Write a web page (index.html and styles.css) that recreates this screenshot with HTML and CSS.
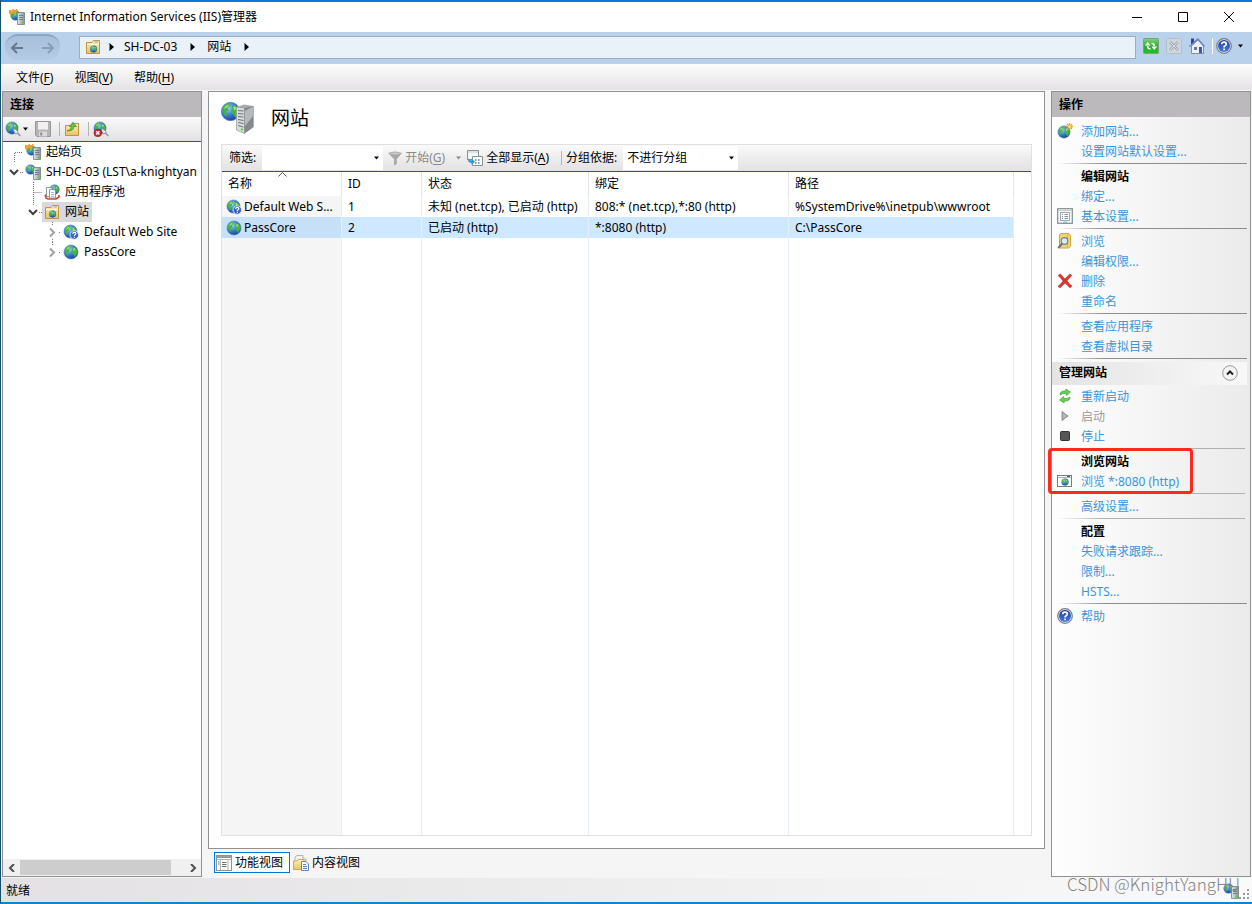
FILE: index.html
```html
<!DOCTYPE html>
<html lang="zh-CN">
<head>
<meta charset="utf-8">
<title>Internet Information Services (IIS)管理器</title>
<link rel="stylesheet" href="styles.css">
</head>
<body>
<svg class="sprite" aria-hidden="true">
  <defs>
    <radialGradient id="sea" cx="0.35" cy="0.3" r="0.8">
      <stop offset="0" stop-color="#a5dcfb"/><stop offset="0.45" stop-color="#3a86d8"/><stop offset="1" stop-color="#12368e"/>
    </radialGradient>
    <linearGradient id="gold" x1="0" y1="0" x2="0" y2="1">
      <stop offset="0" stop-color="#fff0b8"/><stop offset="1" stop-color="#e8c166"/>
    </linearGradient>
    <linearGradient id="steel" x1="0" y1="0" x2="1" y2="0">
      <stop offset="0" stop-color="#e2e6e8"/><stop offset="1" stop-color="#8b9499"/>
    </linearGradient>
    <linearGradient id="royal" x1="0" y1="0" x2="0" y2="1">
      <stop offset="0" stop-color="#1c3f9e"/><stop offset="1" stop-color="#4a78e0"/>
    </linearGradient>
    <linearGradient id="leaf" x1="0" y1="0" x2="0" y2="1">
      <stop offset="0" stop-color="#7fd67a"/><stop offset="0.5" stop-color="#2fae2f"/><stop offset="1" stop-color="#17c41c"/>
    </linearGradient>
  </defs>
  <symbol id="globe" viewBox="0 0 16 16">
    <circle cx="8" cy="8" r="7" fill="url(#sea)" stroke="#5b7fb4" stroke-width=".6"/>
    <path d="M2 5.5Q4 1.5 8 1.8L7.5 4 6 5.2 6.5 7 4.5 8.2 5.5 10 4.5 12 2.5 9.5ZM9.5 3.5L12 3.2Q14.5 5.5 14.6 8.5L13 11 11.5 13 10.5 10.5 8.8 9 9.2 6.5Z" fill="#46b53c"/>
    <path d="M3 6Q4 3 7 2.6L6 4.5ZM10 4.5L11.5 4 12.5 6 10.8 7Z" fill="#a5e078"/>
  </symbol>
  <symbol id="server" viewBox="0 0 8 13">
    <path d="M.5 1.5L2 .5H7.5V12.5H.5Z" fill="url(#steel)" stroke="#747d82" stroke-width=".8"/>
    <path d="M2 3.5H6.2M2 5.5H6.2M2 7.5H6.2" stroke="#647078" stroke-width=".8"/>
    <rect x="4.6" y="9.8" width="1.8" height="1.4" fill="#43d51c"/>
  </symbol>
  <symbol id="site-server" viewBox="0 0 16 16">
    <use href="#globe" x="0" y="0" width="11" height="11"/>
    <use href="#server" x="8" y="3" width="8" height="13"/>
  </symbol>
  <symbol id="start-page" viewBox="0 0 16 16">
    <use href="#globe" x="1" y="1" width="11" height="11"/>
    <path d="M0 1L3 2 4 0 6 2 8 0 8 3 6 4 3 4 2 6 0 4Z" fill="#f4a623" stroke="#d87e18" stroke-width=".5"/>
    <use href="#server" x="8" y="3" width="8" height="13"/>
  </symbol>
  <symbol id="site-folder" viewBox="0 0 16 16">
    <path d="M1.5 3.5H7L8.5 1.5H14.5V14.5H1.5Z" fill="url(#gold)" stroke="#c4933d"/>
    <path d="M2 5.5H14" stroke="#fff8dc"/>
    <path d="M9.5 3H13" stroke="#67b8d5"/>
    <use href="#globe" x="4.5" y="6" width="8" height="8"/>
  </symbol>
  <symbol id="globe-question" viewBox="0 0 16 16">
    <use href="#globe" x="0" y="0" width="15" height="15"/>
    <circle cx="11.3" cy="11" r="4.3" fill="#3c67b8" stroke="#dce8fa"/>
    <path d="M9.700 9.9Q9.8 8.4 11.3 8.4T12.900 9.8Q12.800 10.7 11.4 11.2V12M11.4 12.7V13.8" fill="none" stroke="#fff" stroke-width="1.2"/>
  </symbol>
  <symbol id="app-pool" viewBox="0 0 16 16">
    <use href="#globe" x="5" y="0" width="11" height="11"/>
    <path d="M.7 12.5L2 11V14L4 15H12L15 13V11" fill="none" stroke="#d6452f" stroke-width="1.6"/>
    <path d="M2.5 3.5H8V12.5H2.5Z" fill="#f5f7fa" stroke="#78838f" stroke-width=".8"/>
    <path d="M5.5 5.5H10L11.5 7V14H5.5Z" fill="#fff" stroke="#78838f" stroke-width=".8"/>
    <path d="M7 8.5H10M7 10.5H10M7 12.3H10" stroke="#9aa5b0" stroke-width=".8"/>
  </symbol>
  <symbol id="globe-plug" viewBox="0 0 16 16">
    <use href="#globe" x="0" y="0" width="14" height="14"/>
    <path d="M8 8.5L10 7.8 13 10.5 12.5 12.5 10 12.8Z" fill="#e4eaee" stroke="#6f8593" stroke-width=".8"/>
    <path d="M12.5 12L15.3 15" stroke="#8ca2ad" stroke-width="1.8"/>
  </symbol>
  <symbol id="globe-disconnect" viewBox="0 0 16 16">
    <use href="#globe-plug" width="16" height="16"/>
    <circle cx="4.8" cy="11.8" r="3.9" fill="#d22a2a" stroke="#931717" stroke-width=".6"/>
    <path d="M3.2 10.2L6.4 13.4M6.4 10.2L3.2 13.4" stroke="#fff" stroke-width="1.4"/>
  </symbol>
  <symbol id="save" viewBox="0 0 16 16">
    <path d="M.5 .5H15.5V15.5H2L.5 14Z" fill="#b4b4b4" stroke="#979797"/>
    <rect x="3" y="1" width="10" height="7.5" fill="#f1f1f1"/>
    <rect x="4" y="10.5" width="8" height="5" fill="#dadada"/><rect x="5.2" y="11.5" width="2" height="3" fill="#8b8b8b"/>
  </symbol>
  <symbol id="folder-up" viewBox="0 0 16 16">
    <path d="M1.5 4.5H7L8.5 2.5H14.5V14.5H1.5Z" fill="url(#gold)" stroke="#c4933d"/>
    <path d="M3 10Q7 9.500 7.500 5.5H5.5L9 1.2 12.5 5.5H10Q10 10 3 10Z" fill="#67c83b" stroke="#328c1b" stroke-width=".7"/>
  </symbol>
  <symbol id="help" viewBox="0 0 16 16">
    <circle cx="8" cy="8" r="7.3" fill="#e5e8ee" stroke="#777d8b" stroke-width="1.2"/>
    <circle cx="8" cy="8" r="6" fill="url(#royal)"/>
    <path d="M5.7 6.3Q5.7 4.2 8 4.2T10.3 6.2Q10.2 7.4 8.2 8.4V9.6M8.1 10.5V12.2" fill="none" stroke="#fff" stroke-width="1.7"/>
  </symbol>
  <symbol id="refresh-box" viewBox="0 0 16 16">
    <rect x=".5" y=".5" width="15" height="15" rx="1" fill="url(#leaf)" stroke="#7e9f7e"/>
    <path d="M7.500 11Q4.700 11 4.700 8" fill="none" stroke="#fff" stroke-width="1.600"/><path d="M1.800 7.500L4.700 4 7.600 7.500Z" fill="#fff"/>
    <path d="M8.500 5.500Q11.300 5.500 11.300 8" fill="none" stroke="#fff" stroke-width="1.600"/><path d="M8.400 8.500L11.300 12 14.200 8.500Z" fill="#fff"/>
  </symbol>
  <symbol id="stop-box" viewBox="0 0 16 16">
    <rect x=".5" y=".5" width="15" height="15" rx="1" fill="#cdd5dd" stroke="#b5bfc9"/>
    <path d="M4 4L12 12M12 4L4 12" stroke="#a2abb4" stroke-width="2.600"/><path d="M4 4L12 12M12 4L4 12" stroke="#e8ecf0" stroke-width=".8"/>
  </symbol>
  <symbol id="home" viewBox="0 0 16 16">
    <path d="M2 .5H5V6H2Z" fill="#2c3fc0"/>
    <path d="M2.500 8L9 2 14.500 8V15.500H2.500Z" fill="#eef0f4" stroke="#6a7895" stroke-width=".8"/>
    <path d="M.5 8.500L8.800 1 15.500 8.500" fill="none" stroke="#6785c9" stroke-width="1.500"/>
    <path d="M10 9H13V15H10Z" fill="#375b9e"/><path d="M5 9H8V12H5Z" fill="#65799d"/>
  </symbol>
  <symbol id="big-server" viewBox="0 0 34 34">
    <use href="#globe" x="-1" y="0" width="21" height="21"/>
    <path d="M15.500 6L23 3.500 32.500 5V26L23.500 32.500 15.500 29Z" fill="#a9adb0"/>
    <path d="M15.500 6L23.500 7V32.500L15.500 29Z" fill="#d8dbde" stroke="#8d9296" stroke-width=".6"/>
    <path d="M23.500 7L32.500 5V26L23.500 32.500Z" fill="#85898c"/><path d="M24 10L32 5.500V15L24 25Z" fill="#b6babc"/>
    <path d="M17 9.500L22.500 10M17 12.500L22.500 13M17 15.500L22.500 16M17 18.500L22.500 19.500M17 21.500L22.500 22.500M17 24.500L22.500 26" stroke="#6c7276"/>
    <path d="M20 28L22 29" stroke="#4ad72a" stroke-width="1.800"/>
  </symbol>
  <symbol id="funnel" viewBox="0 0 16 16">
    <path d="M1 3Q8 0 15 3L9.800 9V14L7 15.500V9Z" fill="#a8a8a8"/><path d="M2 3.300Q8 1.500 14 3.300 8 5.500 2 3.300Z" fill="#d0d0d0"/>
  </symbol>
  <symbol id="show-all" viewBox="0 0 16 16">
    <path d="M.5 .5H11.500V9.500H.5Z" fill="#f5f7f9" stroke="#87919a"/><path d="M1 2H11" stroke="#c5cbd2"/>
    <path d="M5.500 6.500H15.500V15.500H5.500Z" fill="#fff" stroke="#87919a"/>
    <path d="M8 10H9.500M11 10H12.500M8 13H9.500M11 13H12.500" stroke="#5372a0" stroke-width="1.500"/>
    <path d="M.5 7Q1 10.500 4.500 10.500V8.500L8 11.800 4.500 15V13Q0 12.500 .5 7Z" fill="#2f94d8"/>
  </symbol>
  <symbol id="globe-new" viewBox="0 0 16 16">
    <use href="#globe" x="0" y="2" width="14" height="14"/>
    <path d="M12.500 0V7M9 3.500H16M10 1L15 6M15 1L10 6" stroke="#f2a02c" stroke-width="1.300"/><circle cx="12.500" cy="3.500" r="1.300" fill="#ffe793"/>
  </symbol>
  <symbol id="settings-form" viewBox="0 0 16 16">
    <rect x=".7" y=".7" width="14.600" height="14.600" fill="#fafafa" stroke="#858b91" stroke-width="1.200"/>
    <path d="M1 2.500H15" stroke="#c7ccd1"/><rect x="3.500" y="4.500" width="9" height="8" fill="#fff" stroke="#a1a8ae"/>
    <path d="M5 6.500H6M7.500 6.500H11M5 8.500H6M7.500 8.500H11M5 10.500H6M7.500 10.500H11" stroke="#87919b"/><path d="M6 14.200H10" stroke="#39cde0"/>
  </symbol>
  <symbol id="folder-search" viewBox="0 0 16 16">
    <path d="M2.500 1.500L4 .5H12L13.500 3V13.500L11.500 15H2.500Z" fill="#f3d574" stroke="#d3a536"/>
    <path d="M10.500 2V14" stroke="#dcae3e"/><circle cx="7.500" cy="8" r="3.300" fill="#d5e9fa" stroke="#6f87a0" stroke-width="1.300"/>
    <path d="M5.200 10.500L1.200 15" stroke="#697481" stroke-width="2"/>
  </symbol>
  <symbol id="delete" viewBox="0 0 16 16">
    <path d="M1 2.500L3.500 1Q5.500 3.500 8 6 10.500 3 13 1L14.800 2.500Q12 5 10 8 12 11 15 13L13 14.800Q10.500 12.500 8 10 5.500 12.500 3 14.800L1 13.500Q4 11 6 8 4 5 1 2.500Z" fill="#e5322d" stroke="#b5302b" stroke-width=".6"/>
  </symbol>
  <symbol id="restart" viewBox="0 0 16 16">
    <path d="M3 7Q3 2.500 8.500 3L9 1 13.500 4 9.500 7.500 9 5.500Q5.500 5 3 7Z" fill="#6bd052" stroke="#3a9a2f" stroke-width=".6"/>
    <path d="M13 9Q13 13.500 7.500 13L7 15 2.500 12 6.500 8.500 7 10.500Q10.500 11 13 9Z" fill="#6bd052" stroke="#3a9a2f" stroke-width=".6"/>
  </symbol>
  <symbol id="play" viewBox="0 0 16 16"><path d="M5 3.500L11 8 5 12.500Z" fill="#b4b4b4" stroke="#8e8e8e"/></symbol>
  <symbol id="stop" viewBox="0 0 16 16"><rect x="3.500" y="3.500" width="9" height="9" rx="1" fill="#555" stroke="#333"/></symbol>
  <symbol id="browse-window" viewBox="0 0 16 16">
    <rect x=".5" y="2.500" width="14" height="11" fill="#fff" stroke="#777d84"/><path d="M1 4.500H14" stroke="#b2b8be"/><path d="M10 3.500H13" stroke="#555"/>
    <use href="#globe" x="4" y="5" width="8" height="8"/>
  </symbol>
  <symbol id="features" viewBox="0 0 16 16">
    <rect x=".5" y=".5" width="15" height="15" fill="#fdfdf5" stroke="#8c9297"/><path d="M1 2H15" stroke="#949ba1" stroke-width="2"/><path d="M1 4.500H15M4.500 5V15M12 5V15" stroke="#b2b7ba"/>
    <path d="M2 7H3.500M2 9H3.500M6 7.500H10.500M6 9.500H10.500M6 11.500H10.500" stroke="#67717b"/>
  </symbol>
  <symbol id="content" viewBox="0 0 16 16">
    <path d="M2 2L4 .5H10V4H13V14H2Z" fill="#f3f3ef" stroke="#a3a39d" stroke-width=".8"/>
    <path d="M.5 6H4L5 4.500H11V14.500H.5Z" fill="url(#gold)" stroke="#c99b4a" stroke-width=".8"/>
    <path d="M8.500 6.500H13L15.500 9V15.500H8.500Z" fill="#fff" stroke="#6f8496"/><path d="M10 9.500H13M10 11.500H14M10 13.500H14" stroke="#5883b7"/>
  </symbol>
  <symbol id="caret" viewBox="0 0 7 4"><path d="M1 .5H6L3.500 3.500Z" fill="currentColor"/></symbol>
  <symbol id="crumb" viewBox="0 0 5 8"><path d="M.5 0L5 4 .5 8Z" fill="#000"/></symbol>
</svg>

<div class="window">
  <header class="titlebar">
    <svg class="icon"><use href="#start-page"/></svg>
    <h1 class="window-title">Internet Information Services (IIS)管理器</h1>
    <button class="window-button" aria-label="最小化"><svg class="glyph" viewBox="0 0 12 12"><path d="M1 6.500H11"/></svg></button>
    <button class="window-button" aria-label="最大化"><svg class="glyph" viewBox="0 0 12 12"><path d="M1.500 1.500H10.500V10.500H1.500Z"/></svg></button>
    <button class="window-button" aria-label="关闭"><svg class="glyph" viewBox="0 0 12 12"><path d="M1 1L11 11M11 1L1 11"/></svg></button>
  </header>

  <nav class="addressbar" aria-label="地址">
    <div class="history">
      <button aria-label="后退"><svg class="arrow" viewBox="0 0 14 12"><path d="M13 6H2M7 1L2 6L7 11"/></svg></button>
      <button class="faded" aria-label="前进"><svg class="arrow" viewBox="0 0 14 12"><path d="M1 6H12M7 1L12 6L7 11"/></svg></button>
    </div>
    <div class="breadcrumb">
      <svg class="icon"><use href="#site-folder"/></svg>
      <svg class="crumb"><use href="#crumb"/></svg>
      <a href="#">SH-DC-03</a>
      <svg class="crumb"><use href="#crumb"/></svg>
      <a href="#">网站</a>
      <svg class="crumb"><use href="#crumb"/></svg>
    </div>
    <div class="address-tools">
      <button aria-label="刷新"><svg class="icon"><use href="#refresh-box"/></svg></button>
      <button aria-label="停止"><svg class="icon"><use href="#stop-box"/></svg></button>
      <button aria-label="主页"><svg class="icon"><use href="#home"/></svg></button>
      <button class="help-button" aria-label="帮助"><svg class="icon"><use href="#help"/></svg><svg class="caret"><use href="#caret"/></svg></button>
    </div>
  </nav>

  <nav class="menubar" aria-label="菜单">
    <button>文件(<u>F</u>)</button>
    <button>视图(<u>V</u>)</button>
    <button>帮助(<u>H</u>)</button>
  </nav>

  <main class="workspace">
    <aside class="panel connections">
      <h2 class="panel-title">连接</h2>
      <div class="connection-tools">
        <button aria-label="连接"><svg class="icon"><use href="#globe-plug"/></svg><svg class="caret"><use href="#caret"/></svg></button>
        <button class="save" aria-label="保存"><svg class="icon"><use href="#save"/></svg></button>
        <span class="divider"></span>
        <button aria-label="向上"><svg class="icon"><use href="#folder-up"/></svg></button>
        <span class="divider"></span>
        <button aria-label="断开连接"><svg class="icon"><use href="#globe-disconnect"/></svg></button>
      </div>
      <ul class="tree">
        <li class="node"><svg class="lead" viewBox="0 0 20 20"><path class="dots" d="M11.500 20V10.500H20"/></svg><span class="label"><svg class="icon"><use href="#start-page"/></svg>起始页</span></li>
        <li class="node"><svg class="lead" viewBox="0 0 20 20"><path class="dots" d="M17 10.500H20"/><path class="open" d="M7 8L11 12L15 8"/></svg><span class="label"><svg class="icon"><use href="#site-server"/></svg>SH-DC-03 (LST\a-knightyan</span></li>
        <li class="node level-2"><svg class="lead" viewBox="0 0 20 20"><path class="dots" d="M11.500 0V20M11.500 10.500H20"/></svg><span class="label"><svg class="icon"><use href="#app-pool"/></svg>应用程序池</span></li>
        <li class="node level-2"><svg class="lead" viewBox="0 0 20 20"><path class="dots" d="M11.500 0V4M17 10.500H20"/><path class="open" d="M7 8L11 12L15 8"/></svg><span class="label current"><svg class="icon"><use href="#site-folder"/></svg>网站</span></li>
        <li class="node level-3"><svg class="lead" viewBox="0 0 20 20"><path class="dots" d="M11.500 0V3M11.500 17V20M18 10.500H20"/><path class="closed" d="M9 6.500L13 10.500L9 14.500"/></svg><span class="label"><svg class="icon"><use href="#globe-question"/></svg>Default Web Site</span></li>
        <li class="node level-3"><svg class="lead" viewBox="0 0 20 20"><path class="dots" d="M11.500 0V3M18 10.500H20"/><path class="closed" d="M9 6.500L13 10.500L9 14.500"/></svg><span class="label"><svg class="icon"><use href="#globe"/></svg>PassCore</span></li>
      </ul>
      <div class="scrollbar">
        <button aria-label="向左滚动"><svg class="scroll-arrow" viewBox="0 0 8 8"><path d="M6 0L2 4L6 8"/></svg></button>
        <span class="track"><span class="thumb"></span></span>
        <button aria-label="向右滚动"><svg class="scroll-arrow" viewBox="0 0 8 8"><path d="M2 0L6 4L2 8"/></svg></button>
      </div>
    </aside>

    <section class="center">
      <div class="panel page">
        <div class="page-heading">
          <svg class="big-icon"><use href="#big-server"/></svg>
          <h2 class="page-title">网站</h2>
        </div>
        <div class="list">
          <div class="list-tools">
            <label for="filter">筛选:</label>
            <span class="combo filter"><input id="filter" type="text"><button aria-label="筛选历史"><svg class="caret"><use href="#caret"/></svg></button></span>
            <button class="start" disabled><svg class="icon"><use href="#funnel"/></svg>开始(<u>G</u>)<svg class="caret"><use href="#caret"/></svg></button>
            <button class="show-all"><svg class="icon"><use href="#show-all"/></svg>全部显示(<u>A</u>)</button>
            <span class="divider"></span>
            <label class="group-label" for="group">分组依据:</label>
            <span class="combo group"><select id="group"><option>不进行分组</option></select><svg class="caret"><use href="#caret"/></svg></span>
          </div>
          <div class="table-area">
            <table class="sites">
              <colgroup><col class="col-name"><col class="col-id"><col class="col-state"><col class="col-binding"><col class="col-path"><col></colgroup>
              <thead>
                <tr><th>名称<svg class="sort" viewBox="0 0 9 5"><path d="M.5 4.500L4.500 .5L8.500 4.500"/></svg></th><th>ID</th><th>状态</th><th>绑定</th><th>路径</th><th></th></tr>
              </thead>
              <tbody>
                <tr><td><span class="site"><svg class="icon"><use href="#globe-question"/></svg><span class="site-name">Default Web S...</span></span></td><td>1</td><td>未知 (net.tcp), 已启动 (http)</td><td>808:* (net.tcp),*:80 (http)</td><td>%SystemDrive%\inetpub\wwwroot</td><td></td></tr>
                <tr class="selected"><td><span class="site"><svg class="icon"><use href="#globe"/></svg><span class="site-name">PassCore</span></span></td><td>2</td><td>已启动 (http)</td><td>*:8080 (http)</td><td>C:\PassCore</td><td></td></tr>
                <tr class="rest"><td></td><td></td><td></td><td></td><td></td><td></td></tr>
              </tbody>
            </table>
          </div>
        </div>
      </div>
      <div class="view-tabs">
        <button class="active"><svg class="icon"><use href="#features"/></svg>功能视图</button>
        <button><svg class="icon"><use href="#content"/></svg>内容视图</button>
      </div>
    </section>

    <aside class="panel actions">
      <h2 class="panel-title">操作</h2>
      <div class="action-list">
        <a href="#"><svg class="icon"><use href="#globe-new"/></svg>添加网站...</a>
        <a href="#">设置网站默认设置...</a>
        <hr>
        <h3>编辑网站</h3>
        <a href="#">绑定...</a>
        <a href="#"><svg class="icon"><use href="#settings-form"/></svg>基本设置...</a>
        <hr>
        <a href="#"><svg class="icon"><use href="#folder-search"/></svg>浏览</a>
        <a href="#">编辑权限...</a>
        <a href="#"><svg class="icon"><use href="#delete"/></svg>删除</a>
        <a href="#">重命名</a>
        <hr>
        <a href="#">查看应用程序</a>
        <a href="#">查看虚拟目录</a>
        <hr>
        <div class="section-title">
          <h3>管理网站</h3>
          <button aria-label="折叠"><svg class="collapse" viewBox="0 0 16 16"><circle cx="8" cy="8" r="7.300"/><path d="M5 9.500L8 6.500L11 9.500"/></svg></button>
        </div>
        <a href="#"><svg class="icon"><use href="#restart"/></svg>重新启动</a>
        <a class="disabled" aria-disabled="true" href="#"><svg class="icon"><use href="#play"/></svg>启动</a>
        <a href="#"><svg class="icon"><use href="#stop"/></svg>停止</a>
        <hr class="inner">
        <div class="marked">
          <h3>浏览网站</h3>
          <a href="#"><svg class="icon"><use href="#browse-window"/></svg>浏览 *:8080 (http)</a>
        </div>
        <hr class="inner">
        <a href="#">高级设置...</a>
        <hr class="inner">
        <h3>配置</h3>
        <a href="#">失败请求跟踪...</a>
        <a href="#">限制...</a>
        <a href="#">HSTS...</a>
        <hr>
        <a href="#"><svg class="icon"><use href="#help"/></svg>帮助</a>
      </div>
    </aside>
  </main>

  <footer class="statusbar">
    <span>就绪</span>
    <svg class="icon"><use href="#site-server"/></svg>
    <svg class="grip" viewBox="0 0 11 11"><path d="M8 0H10V2H8ZM4 4H6V6H4ZM8 4H10V6H8ZM0 8H2V10H0ZM4 8H6V10H4ZM8 8H10V10H8Z"/></svg>
    <span class="watermark">CSDN @KnightYangHU</span>
  </footer>
</div>
</body>
</html>
```
FILE: styles.css
```css
*, *::after { box-sizing: border-box; }

body {
  margin: 0;
  font: 12px/20px "Noto Sans", "Noto Sans CJK SC", sans-serif;
  color: #000;
}

h1, h2, h3, ul { margin: 0; padding: 0; font-size: 12px; }

button {
  display: inline-flex;
  align-items: center;
  margin: 0;
  padding: 0;
  border: 0;
  background: none;
  color: inherit;
  font: inherit;
  white-space: nowrap;
}

svg { display: block; flex: none; }
u { text-underline-offset: 2px; }

.sprite { position: absolute; width: 0; height: 0; }
.icon { width: 16px; height: 16px; }
.caret { width: 7px; height: 4px; }

.window {
  display: flex;
  flex-direction: column;
  height: 100vh;
  border-left: 1px solid #17506c;
  border-bottom: 2px solid #1583c4;
  background: #f5f5f5;
}

/* Title bar */
.titlebar {
  display: flex;
  align-items: center;
  height: 32px;
  padding-left: 8px;
  border-top: 2px solid #0a78d8;
  background: #fff;
}
.window-title { flex: 1; margin-left: 5px; font-weight: 400; }
.window-button { justify-content: center; width: 46px; height: 28px; }
.glyph { width: 12px; height: 12px; fill: none; stroke: #000; }

/* Address bar */
.addressbar {
  display: flex;
  align-items: center;
  height: 32px;
  padding: 0 7px 2px 4px;
  background: #b9d1ea;
}
.history {
  display: flex;
  align-items: center;
  justify-content: space-between;
  width: 55px;
  height: 26px;
  padding: 0 5px;
  border-top: 2px solid #8ea5bf;
  border-radius: 13px;
  background: linear-gradient(#a6bfdb, #b4cbe4);
}
.arrow { width: 14px; height: 12px; fill: none; stroke: #66788c; stroke-width: 2; }
.faded { opacity: .5; }
.breadcrumb {
  display: flex;
  flex: 1;
  align-items: center;
  height: 23px;
  margin-left: 19px;
  padding-left: 5px;
  border: 1px solid #97aec6;
  background: #eaf1f9;
}
.breadcrumb a { color: #000; text-decoration: none; }
.crumb { width: 5px; height: 8px; margin: 0 12px 0 13px; }
.crumb:nth-child(2) { margin: 0 10px 0 8px; }
.address-tools { display: flex; gap: 7px; margin: 0 1px 0 7px; padding-bottom: 2px; }
.help-button { gap: 5px; padding-left: 3px; border-left: 1px solid #fff; }

/* Menu */
.menubar {
  display: flex;
  gap: 21px;
  height: 26px;
  padding: 2px 0 0 15px;
  background: linear-gradient(#fdfdfd, #e4e2e4);
}

/* Three columns */
.workspace {
  display: grid;
  flex: 1;
  grid-template-columns: 200px minmax(0, 1fr) 200px;
  gap: 6px;
  min-height: 0;
  padding: 1px 1px;
}
.panel { border: 1px solid #919191; background: #fff; }
.panel-title { height: 25px; padding: 3px 7px; background: #bbb9bb; }

.connections { display: flex; flex-direction: column; min-width: 0; }
.connection-tools {
  display: flex;
  align-items: center;
  height: 25px;
  padding-left: 2px;
  border-bottom: 1px solid #49497a;
  background: linear-gradient(#fafafa, #e3e1e3);
}
.connection-tools button { gap: 1px; }
.connection-tools .save { margin-left: 6px; }
.divider { width: 1px; height: 14px; margin: 0 4px 0 8px; background: #b5b5a8; }

.tree { flex: 1; overflow: hidden; list-style: none; }
.node { display: flex; height: 20px; white-space: nowrap; }
.level-2 { padding-left: 19px; }
.level-3 { padding-left: 38px; }
.lead { width: 20px; height: 20px; fill: none; }
.dots { stroke: #777; stroke-dasharray: 1 1; }
.open { stroke: #404040; stroke-width: 2; }
.closed { stroke: #a0a0a0; stroke-width: 2; }
.label { display: flex; align-items: center; gap: 5px; padding: 0 3px 0 2px; }
.label.current { background: #d9d9d9; }

.scrollbar { display: flex; height: 17px; background: #f0f0f0; }
.scrollbar button { justify-content: center; width: 17px; }
.scroll-arrow { width: 8px; height: 8px; fill: none; stroke: #505050; stroke-width: 2; }
.track { flex: 1; padding: 1px 0; }
.thumb { display: block; width: 92%; height: 15px; background: #cdcdcd; }

/* Page */
.center { display: flex; flex-direction: column; min-width: 0; }
.page { display: flex; flex: 1; flex-direction: column; min-height: 0; padding: 0 12px 12px; }
.page-heading { display: flex; align-items: center; gap: 16px; height: 52px; }
.big-icon { width: 34px; height: 34px; }
.page-title { font-size: 19px; font-weight: 400; line-height: 28px; }

.list { display: flex; flex: 1; flex-direction: column; border: 1px solid #e0e0e0; }
.list-tools {
  display: flex;
  align-items: center;
  height: 27px;
  padding-left: 7px;
  border-bottom: 1px solid #49497a;
  background: linear-gradient(#fafafa, #e3e1e3);
}
.combo { display: flex; align-items: center; height: 24px; background: #fff; }
.filter { width: 121px; margin-left: 6px; }
.filter input { flex: 1; min-width: 0; height: 22px; padding: 0 4px; border: 0; background: none; font: inherit; outline: 0; }
.filter .caret { margin-right: 3px; }
.start { gap: 0; margin-left: 4px; color: #8a8a8a; }
.start .icon { margin-right: 2px; }
.start .caret { margin: 0 5px 0 10px; }
.show-all .icon { margin-right: 3px; }
.list-tools .divider { margin: 0 4px 0 12px; }
.group { width: 115px; margin-left: 6px; padding-right: 3px; }
.group select { flex: 1; min-width: 0; height: 22px; padding: 0 4px; border: 0; appearance: none; background: none; color: #000; font: inherit; }

.table-area { flex: 1; min-height: 0; }
.sites { width: 100%; height: 100%; table-layout: fixed; border-collapse: separate; border-spacing: 0; }
.col-name { width: 120px; }
.col-id { width: 80px; }
.col-state { width: 167px; }
.col-binding { width: 200px; }
.col-path { width: 225px; }
.sites th, .sites td { height: 21px; padding: 0 6px; border-right: 1px solid #e8eef7; text-align: left; font-weight: 400; white-space: nowrap; overflow: hidden; }
.sites th { position: relative; height: 24px; border-color: #e4e4e4; }
.sites th:last-child, .sites td:last-child { border-right: 0; }
.sites td:first-child { padding: 0 4px; background: #f5f5f5; }
.sites .rest td { height: auto; }
.sites .selected td { background: #cde8ff; }
.sites .selected td:first-child { background: #c5e0f7; }
.sites .selected td:last-child { background: none; }
.sort { position: absolute; top: 0; left: 56px; width: 9px; height: 5px; fill: none; stroke: #555; }
.site { display: flex; align-items: center; gap: 2px; }
.site-name { overflow: hidden; text-overflow: ellipsis; }

.view-tabs { display: flex; gap: 1px; height: 28px; padding: 3px 0 4px 6px; }
.view-tabs button { gap: 3px; padding: 0 6px 0 1px; border: 1px solid transparent; }
.view-tabs .active { border-color: #0078d7; background: #fff; }

/* Actions */
.actions { background: linear-gradient(90deg, #fefefe, #ebebeb); }
.action-list { padding: 5px 3px 0 5px; }
.action-list a,
.action-list > h3,
.marked h3 { position: relative; display: block; height: 20px; padding-left: 24px; white-space: nowrap; }
.action-list a { color: #3a96da; text-decoration: none; }
.action-list a.disabled { color: #9b9b9b; }
.action-list .icon { position: absolute; top: 1px; left: 0; }
.action-list hr { height: 1px; margin: 1px 0 3px; border: 0; background: linear-gradient(90deg, transparent, #8d8d8d 25%); }
.action-list hr.inner { margin-right: 2px; background: linear-gradient(90deg, transparent, #b0b0b0 25%); }
.section-title {
  display: flex;
  align-items: center;
  justify-content: space-between;
  height: 23px;
  margin: 0 0 2px -5px;
  padding: 0 9px 1px 7px;
  background: linear-gradient(90deg, #e4e4e4, #f8f8f8);
}
.collapse { width: 16px; height: 16px; fill: #f4f4f4; stroke: #999; }
.collapse path { fill: none; stroke: #222; stroke-width: 2; }
.marked { position: relative; }
.marked::after {
  content: "";
  position: absolute;
  inset: -4px auto -2px -9px;
  width: 145px;
  border: 3px solid #fb2a1c;
  border-radius: 4px;
  pointer-events: none;
}

/* Status bar */
.statusbar {
  position: relative;
  display: flex;
  align-items: center;
  height: 24px;
  padding: 1px 2px 0 5px;
  background: linear-gradient(90deg, #e3e1e3, #fafafa);
}
.statusbar > span:first-child { flex: 1; }
.grip { width: 11px; height: 11px; margin-top: 8px; fill: #9a9a9a; }
.statusbar .watermark {
  position: absolute;
  top: -6px;
  right: 12px;
  color: #858585;
  font: 300 17px/24px "Noto Sans CJK SC", sans-serif;
}
```
